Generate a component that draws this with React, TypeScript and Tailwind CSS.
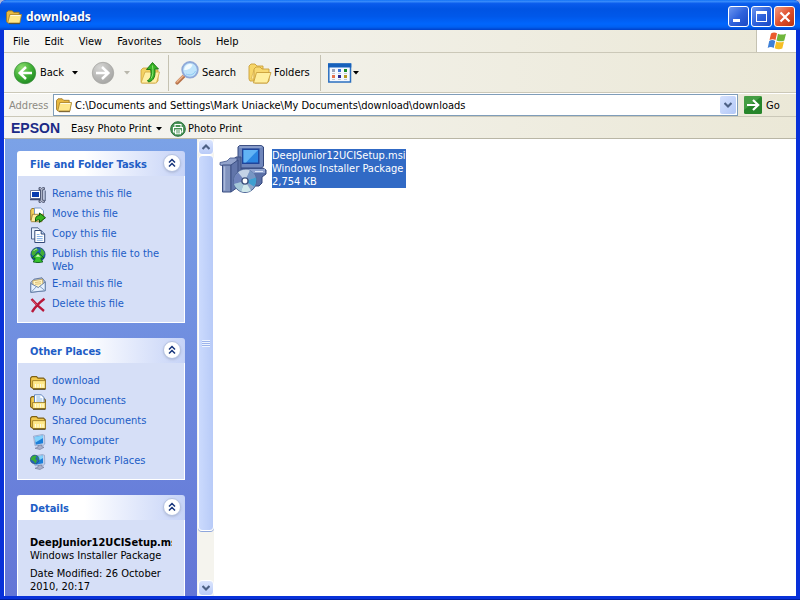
import type { ReactNode } from 'react';

const menus = ['File', 'Edit', 'View', 'Favorites', 'Tools', 'Help'];

function FolderIcon({ className }: { className: string }) {
  return (
    <svg className={className} viewBox="0 0 16 16" aria-hidden="true">
      <path d="M.5 3.500 2 1.800h4.200l1.500 1.500h5.500v3H15l-1.500 7.700H1.800L.5 12.500Z" fill="#e9b93f" stroke="#94701f" strokeWidth=".8" />
      <path d="M1.800 13.500 3.800 5.500h11.800l-1.800 8.500H2.200Z" fill="#ffe88c" stroke="#a8802a" strokeWidth=".8" />
      <path d="M4.500 6.500h9.700" stroke="#fffbe0" strokeWidth="1.200" />
      <path d="M3 14.700h11" stroke="#5b4515" strokeWidth=".8" />
    </svg>
  );
}

function PlainFolderIcon({ papers = false }: { papers?: boolean }) {
  return (
    <svg className="h-4 w-4" viewBox="0 0 16 16" aria-hidden="true">
      <path d="M.6 12.800V4L2 2.600h4.500L8 4.100h5.500l1.900 1.900v8.500H3Z" fill="#f2c94c" stroke="#7d6018" strokeWidth="1.100" />
      {papers && <path d="M4.500 10V.8h6.700L14 3.400V10Z" fill="#fff" stroke="#5f86bf" />}
      {papers && <path d="M6.300 3h4M6.300 5h6M6.300 7h6" stroke="#85b1e4" strokeWidth="1" />}
      <path
        d={papers ? 'M2.600 14.500V8.500h12.800v6Z' : 'M2.600 14.500V6.600h12.800v7.900Z'}
        fill="#ffe98a"
        stroke="#94731f"
        strokeWidth=".8"
      />
      <path d="M5.500 10v3.500M8 10v3.500M10.500 10v3.500M13 10v3.500" stroke="#fffde4" strokeWidth="1.100" />
      <path d="M3 15.300h12.500" stroke="#4d3c12" strokeWidth="1" />
    </svg>
  );
}

function RenameIcon() {
  return (
    <svg className="h-4 w-4" viewBox="0 0 16 16" aria-hidden="true">
      <path d="M.5 3.500h10v8H.5Z" fill="#fff" stroke="#6a7699" />
      <path d="M2 5h7v5H2Z" fill="#083cae" />
      <path d="M0 12.500h10" stroke="#3e4a70" strokeWidth="1.400" />
      <path d="M9 .7h1.700l1 .8 1-.8h1.700v2h-1.700v10.600h1.700v2h-1.700l-1-.8-1 .8H9v-2h1.700V2.700H9Z" fill="#c5cadb" stroke="#3d4662" strokeWidth=".9" />
      <path d="M15.200 3.500v10.500" stroke="#5b6684" strokeWidth="1.200" />
    </svg>
  );
}

function MoveIcon() {
  return (
    <svg className="h-4 w-4" viewBox="0 0 16 16" aria-hidden="true">
      <path d="M.7 13V2.800L2 1.500h3l1.500 1.500H11v10Z" fill="#f2cf5c" stroke="#8f6f20" strokeWidth=".9" />
      <path d="M4.500 1h6l3 2.600V10h-9Z" fill="#fff" stroke="#6e91c2" strokeWidth=".9" />
      <path d="m.9 14.200 1.600-6.900h11l-1.600 7.400H1.500Z" fill="#ffeb99" stroke="#94742a" strokeWidth=".8" />
      <path d="M5.500 11.300C6 9.500 7.500 8.500 9.500 8.500V6l6 4.700-6 4.700v-2.600c-1.800 0-3 .4-4 1.700Z" fill="#39b51e" stroke="#0f550d" strokeWidth="1" />
    </svg>
  );
}

function CopyIcon() {
  return (
    <svg className="h-4 w-4" viewBox="0 0 16 16" aria-hidden="true">
      <path d="M1.500.8h6.500l2 2V12H1.500Z" fill="#e6effd" stroke="#51658c" />
      <path d="M4.800 3.500h6.400l3.500 3.500v8.500H4.800Z" fill="#fff" stroke="#344a78" />
      <path d="M11.200 3.500V7h3.500" fill="#b9d0f2" stroke="#344a78" />
      <path d="M6.800 7.500h2.700M6.800 9.500h5.900M6.800 11.500h5.900M6.800 13.300h5.900" stroke="#8ab3e6" />
    </svg>
  );
}

function PublishIcon() {
  return (
    <svg className="h-4 w-4" viewBox="0 0 16 16" aria-hidden="true">
      <circle cx="8" cy="7.500" r="7.100" fill="#1f5fb8" stroke="#173f78" strokeWidth=".8" />
      <path d="M1.500 6c.3-2.500 2.500-4.500 5-4.800L9 3 6.500 5 4.500 8.500H2ZM10 1.200c2.500.8 4.500 3 4.700 5.800l-2 2.500L10 6l1-2Z" fill="#43ad34" />
      <path d="M3.500 4c1-1.200 2-1.800 3.500-2" stroke="#b9ea9c" fill="none" />
      <path d="m8 5.500 6 5.500h-3c0 2 .8 2.800 2 3.800-3 1-7 1-10 0 1.200-1 2-1.800 2-3.800H2Z" fill="#36c22c" stroke="#0b5c19" strokeWidth=".9" />
      <path d="m8 7.300 2.500 2.500h-5Z" fill="#d3f9bd" />
    </svg>
  );
}

function MailIcon() {
  return (
    <svg className="h-4 w-4" viewBox="0 0 16 16" aria-hidden="true">
      <path d="M.8 5.500 4 2.200 12 .8l3.200 4v8.900L.8 15.300Z" fill="#aebfdc" stroke="#5a7194" strokeWidth=".9" />
      <path d="m2.800 3.800 9.700-1.600.8 7.800-10 1Z" fill="#fff4c4" stroke="#c0a050" strokeWidth=".8" />
      <path d="M5 5.500 11 4.700M5 7.300l6-.6" stroke="#d3b35e" strokeWidth=".8" />
      <path d="M.8 6.500 8.300 10.500 15.200 5v8.700L.8 15.300Z" fill="#e6f1ff" stroke="#5f7ba5" strokeWidth=".9" />
      <path d="m1.500 14.800 5-5.200M14.700 13.400 10 9.500" stroke="#7895bd" strokeWidth=".9" />
    </svg>
  );
}

function DeleteIcon() {
  return (
    <svg className="h-4 w-4" viewBox="0 0 16 16" aria-hidden="true">
      <path d="M1.500 2c3.500 4 7.500 8 12.500 12M14.500 1.800C9.500 5.500 5.500 9.500 2 15" fill="none" stroke="#b8183a" strokeWidth="2.400" />
      <path d="M2.500 3.500 7 8" stroke="#e4657a" strokeWidth=".7" />
    </svg>
  );
}

function ComputerIcon({ globe = false }: { globe?: boolean }) {
  return (
    <svg className="h-4 w-4" viewBox="0 0 16 16" aria-hidden="true">
      <path d="m3.500 2.200 9-1.700 2 .8.300 8.700-1.300 1.200L5 11.800Z" fill="#c4d2ec" stroke="#7d90b8" strokeWidth=".6" />
      <path d="m4.600 3 8.200-1.500.3 7.700-7.400 1.500Z" fill="#1d7fd8" />
      <path d="m4.600 3 8.200-1.500L13 4 5.500 8.500Z" fill="#84d2fb" />
      <path d="m8 11.500 3.500-.6.300 1.600 2.200.8-4 2.200-5-1.200 3-1.200Z" fill="#a9b0cc" stroke="#6d7494" strokeWidth=".6" />
      {globe && <circle cx="4.700" cy="5.500" r="4.400" fill="#2861b8" stroke="#234f6b" strokeWidth=".6" />}
      {globe && <path d="M.8 5.500C1 3 3 1.400 6 1.500L6.500 3 5 4.500 7 6.500 5.500 9.500 3.500 7ZM7.500 2.500l1.300 2-.8 1.500Z" fill="#38ae35" />}
    </svg>
  );
}

function InstallerIcon() {
  return (
    <svg className="h-12 w-12 shrink-0" viewBox="0 0 48 48" aria-hidden="true">
      <path d="M20 23h24l3 2v4l-4 3v6l-3 3H20Z" fill="#5a70a6" stroke="#35477c" />
      <path d="M24 24h22v4H24Z" fill="#8fa3cf" />
      <path d="M36 26.500h8" stroke="#dbe5f7" />
      <path d="M19 2 20.500.6h22L44.500 2v19l-2 2h-22L19 21Z" fill="#6f86bb" stroke="#33477c" />
      <path d="M20.500 2h22" stroke="#a6b8dd" />
      <path d="M23 3.500h17.500V19H23Z" fill="#1f459c" />
      <path d="M24.500 5H39v12.500H24.500Z" fill="#2c86e2" />
      <path d="M24.500 5H39L27 17.500h-2.500Z" fill="#62b3f5" />
      <path d="M10 18 17 12h5v28h-8Z" fill="#5a6da0" stroke="#3c5083" />
      <path d="M1 17.500 8 16l3-3h7v4l-6 4H4.500L1 20Z" fill="#93a4cc" stroke="#40548a" strokeWidth=".8" />
      <path d="M3.500 20H12v27H3.500Z" fill="#8193be" stroke="#3a4e82" />
      <path d="M5.500 21.500v24" stroke="#aab8da" strokeWidth="1.500" />
      <path d="m12 20 7-5v27l-7 5Z" fill="#6175aa" stroke="#3c5083" />
      <circle cx="26" cy="36" r="11.500" fill="#8fa6c9" stroke="#4c6494" />
      <path d="m26 36-7-8.600c4-3.300 9-3.500 12-1.800Z" fill="#c3d2e6" />
      <path d="m26 36 5-10.400c3 1.300 5 4 5.800 7Z" fill="#7796c4" />
      <path d="m26 36 11-3.400c.8 3 0 6.400-2 9Z" fill="#3f9fd0" />
      <path d="m26 36 6 9.400c-3 1.900-7 2.200-10 .8Z" fill="#cfe8ea" />
      <path d="m26 36-11 3c-1-3.500.3-8 4-11.600Z" fill="#6f83bb" />
      <path d="m26 36-11 3c1 3 3.500 6 7 7.200Z" fill="#a4c7d8" />
      <circle cx="26" cy="36" r="3.800" fill="#40557f" />
      <circle cx="26" cy="36" r="2.400" fill="#fff" />
    </svg>
  );
}

function RoundArrow({ forward = false }: { forward?: boolean }) {
  const id = forward ? 'fwd' : 'back';
  return (
    <svg className="h-6 w-6 shrink-0" viewBox="0 0 24 24" aria-hidden="true">
      <defs>
        <radialGradient id={id} cx=".35" cy=".25" r=".85">
          <stop offset="0" stopColor={forward ? '#d6d6d4' : '#8bdc6e'} />
          <stop offset=".55" stopColor={forward ? '#b8b8b6' : '#3fae35'} />
          <stop offset="1" stopColor={forward ? '#a2a2a0' : '#1a841f'} />
        </radialGradient>
      </defs>
      <circle cx="12" cy="12" r="10.700" fill={`url(#${id})`} stroke={forward ? '#a6a6a2' : '#3b8f3b'} strokeWidth=".8" />
      <path
        d={forward ? 'M5 12h12M11 6l6.300 6-6.300 6' : 'M19 12H7M13 6l-6.300 6 6.300 6'}
        fill="none"
        stroke="#fff"
        strokeWidth="2.500"
      />
    </svg>
  );
}

function UpIcon() {
  return (
    <svg className="h-6 w-6" viewBox="0 0 24 24" aria-hidden="true">
      <path d="M3 21V9l2-2h5l2 2h8v11l-3 2H4Z" fill="#f3d264" stroke="#cda136" strokeWidth=".8" />
      <path d="m3 22 4-11h14.500l-3 11Z" fill="#fff0a6" stroke="#d1a842" strokeWidth=".8" />
      <path d="M9.500 19.500c3.500-1.500 4-5 3.200-11H8.500L14.500 1.500 20.500 8h-3.700c1 7-1 12-6.300 13Z" fill="#36b326" stroke="#167012" strokeWidth=".9" />
      <path d="M14.500 4.500c.8 6 .5 10-1.500 13" stroke="#8ee570" fill="none" />
    </svg>
  );
}

function SearchIcon() {
  return (
    <svg className="h-6 w-6 shrink-0" viewBox="0 0 24 24" aria-hidden="true">
      <path d="m2.200 21.800 7.500-7.500" stroke="#b8734a" strokeWidth="3.600" strokeLinecap="round" />
      <path d="m2 21 7-7" stroke="#edb48b" strokeWidth="1.500" strokeLinecap="round" />
      <circle cx="15" cy="8.800" r="7.800" fill="#bfe4fb" stroke="#8fa9d8" strokeWidth="1.800" />
      <path d="M9.200 9a6 6 0 0 1 8.300-5.500c-1 4-4 5.500-8.300 5.500Z" fill="#f2fbff" />
      <path d="M11 13c4 2 8 .5 9.500-3" stroke="#8fcaf4" fill="none" />
    </svg>
  );
}

function FoldersIcon() {
  return (
    <svg className="h-6 w-6 shrink-0" viewBox="0 0 24 24" aria-hidden="true">
      <path d="M1 18V5l2-2h4l2 2h6v12l-2 3H2Z" fill="#f7d668" stroke="#c99f3a" strokeWidth=".9" />
      <path d="m3 18 3-9h9v9Z" fill="#ffe896" stroke="#d4ab47" strokeWidth=".6" />
      <path d="M6 20V8l2-2h4l2 2h7v12l-2 2H7Z" fill="#f8d970" stroke="#c99f3a" strokeWidth=".9" />
      <path d="m5.500 22 3-10.500H23L19.500 22Z" fill="#ffef9f" stroke="#c99f3a" strokeWidth=".9" />
    </svg>
  );
}

function ViewsIcon() {
  return (
    <svg className="h-5 w-6 shrink-0" viewBox="0 0 24 20" aria-hidden="true">
      <path d="M.8 1h21.700v18H.8Z" fill="#f4f8ff" stroke="#2b6fc0" strokeWidth="1.500" />
      <path d="M0 .5h23.300V4.500H0Z" fill="#1660bb" />
      <path d="M4 6h3v3H4Z" fill="#9aa4ba" />
      <path d="M10 6h3v3h-3Z" fill="#4075d5" />
      <path d="M16 6h3v3h-3Z" fill="#198b2b" />
      <path d="M4 12h3v3H4Z" fill="#e5714d" />
      <path d="M10 12h3v3h-3Z" fill="#2e2a91" />
      <path d="M16 12h3v3h-3Z" fill="#b69a22" />
      <path d="M4 10.500h3M10 10.500h3M16 10.500h3M4 16.500h3M10 16.500h3M16 16.500h3" stroke="#b7bcc8" strokeWidth=".8" />
    </svg>
  );
}

function PrintIcon() {
  return (
    <svg className="h-4 w-4 shrink-0" viewBox="0 0 16 16" aria-hidden="true">
      <circle cx="8" cy="8" r="7.300" fill="#4a9357" stroke="#27703a" />
      <path d="M5 6.500V3.500h6v3M3.500 6.500h9v4.500h-9ZM5.500 9h5v3.800h-5Z" fill="none" stroke="#fff" strokeWidth="1.100" />
    </svg>
  );
}

function WindowsFlag() {
  return (
    <svg className="h-5 w-5" viewBox="0 0 20 20" aria-hidden="true">
      <path d="M4 2.500C6 1 8 1.200 10 2.200L8.500 9C6.500 7.800 4.500 8 2.500 9Z" fill="#ea5b2d" />
      <path d="M11 2.700c2.500 1.200 5 1.200 8 0L17.300 9.500c-2.500 1.300-5 1-7.800 0Z" fill="#6fb63c" />
      <path d="M2.200 10c2-1.200 4-1.200 6 0l-1.500 7c-2-1.200-4-1.200-6 0Z" fill="#3e80d8" />
      <path d="M9.200 10.500c2.500 1.100 5 1.200 7.800 0l-1.700 7c-2.500 1.200-5 1-7.600-.2Z" fill="#f6be25" />
    </svg>
  );
}

function Caret({ className = 'text-black' }: { className?: string }) {
  return (
    <svg className={`h-1 w-2 shrink-0 ${className}`} viewBox="0 0 8 4" aria-hidden="true">
      <path d="M1 0h6L4 3.500Z" fill="currentColor" />
    </svg>
  );
}

function Chevron({ up = false }: { up?: boolean }) {
  return (
    <svg className="h-2 w-2" viewBox="0 0 8 8" aria-hidden="true">
      <path d={up ? 'M.5 6 4 2.500 7.500 6' : 'M.5 2 4 5.500 7.500 2'} fill="none" stroke="#4d6185" strokeWidth="2.200" />
    </svg>
  );
}

function ScrollButton({ label, up = false }: { label: string; up?: boolean }) {
  return (
    <button
      aria-label={label}
      className="flex h-4 w-4 shrink-0 items-center justify-center rounded-sm border border-white bg-gradient-to-b from-[#dbe5fe] to-[#b9cbf8]"
    >
      <Chevron up={up} />
    </button>
  );
}

function Panel({ title, children }: { title: string; children: ReactNode }) {
  return (
    <section className="shrink-0">
      <header className="flex h-[25px] items-center justify-between rounded-t-[3px] bg-gradient-to-r from-white from-40% to-[#c6d3f7] pt-[2px] pr-1 pl-[13px]">
        <h2 className="font-bold text-[#215dc6]">{title}</h2>
        <button
          aria-label={`Collapse ${title}`}
          className="mb-1 flex h-[18px] w-[18px] items-center justify-center rounded-full border border-[#b4c2e2] bg-white shadow-sm"
        >
          <svg className="h-3 w-3" viewBox="0 0 12 12" aria-hidden="true">
            <path d="m3 5.500 3-3 3 3M3 9.500l3-3 3 3" fill="none" stroke="#16347c" strokeWidth="1.500" />
          </svg>
        </button>
      </header>
      <div className="border border-t-0 border-white bg-[#d6dff7] px-3 pt-[11px] pb-[9px]">{children}</div>
    </section>
  );
}

function TaskList({ items }: { items: { label: string; icon: ReactNode }[] }) {
  return (
    <ul className="flex flex-col gap-1">
      {items.map((item) => (
        <li key={item.label}>
          <a href="#" className="flex min-h-4 items-start gap-[6px] text-[#215dc6] hover:underline">
            <span className="h-4 shrink-0">{item.icon}</span>
            <span>{item.label}</span>
          </a>
        </li>
      ))}
    </ul>
  );
}

const fileTasks = [
  { label: 'Rename this file', icon: <RenameIcon /> },
  { label: 'Move this file', icon: <MoveIcon /> },
  { label: 'Copy this file', icon: <CopyIcon /> },
  { label: 'Publish this file to the Web', icon: <PublishIcon /> },
  { label: 'E-mail this file', icon: <MailIcon /> },
  { label: 'Delete this file', icon: <DeleteIcon /> },
];

const places = [
  { label: 'download', icon: <PlainFolderIcon /> },
  { label: 'My Documents', icon: <PlainFolderIcon papers /> },
  { label: 'Shared Documents', icon: <PlainFolderIcon /> },
  { label: 'My Computer', icon: <ComputerIcon /> },
  { label: 'My Network Places', icon: <ComputerIcon globe /> },
];

function TitleBar() {
  return (
    <header className="flex h-[30px] shrink-0 items-center rounded-t-md bg-[linear-gradient(#0a6cf5,#3b8ffc_4%,#0a5cec_12%,#0054e3_30%,#0058ea_55%,#0066fd_80%,#0060f2_90%,#0040c8)] pt-[3px] pr-[5px] pl-[6px]">
      <FolderIcon className="h-4 w-4" />
      <h1 className="ml-1 flex-1 font-['Noto_Sans'] text-[12px] font-bold text-white [text-shadow:1px_1px_#0a3292]">downloads</h1>
      <div className="flex gap-[2px]">
        <button aria-label="Minimize" className="flex h-[21px] w-[21px] items-end rounded-[3px] border border-white bg-gradient-to-br from-[#6d96f0] via-[#2f62dc] to-[#1a48c4] pb-1 pl-1">
          <span className="h-[3px] w-[7px] bg-white" />
        </button>
        <button aria-label="Maximize" className="flex h-[21px] w-[21px] items-center justify-center rounded-[3px] border border-white bg-gradient-to-br from-[#6d96f0] via-[#2f62dc] to-[#1a48c4]">
          <span className="h-[11px] w-[11px] border border-t-[3px] border-white" />
        </button>
        <button aria-label="Close" className="flex h-[21px] w-[21px] items-center justify-center rounded-[3px] border border-white bg-gradient-to-br from-[#f09a80] via-[#e0502c] to-[#b8330f]">
          <svg className="h-3 w-3" viewBox="0 0 12 12" aria-hidden="true">
            <path d="m1.500 1.500 9 9M10.500 1.500l-9 9" stroke="#fff" strokeWidth="2.200" />
          </svg>
        </button>
      </div>
    </header>
  );
}

function Toolbar() {
  return (
    <div className="flex h-10 shrink-0 items-center border-b border-[#cbc8b8] pl-[9px]">
      <button className="flex w-[66px] items-center gap-[3px]">
        <RoundArrow />
        <span className="flex-1 text-left">Back</span>
        <Caret />
      </button>
      <button aria-label="Forward" className="ml-3 flex w-[40px] items-center justify-between">
        <RoundArrow forward />
        <Caret className="text-[#b9b7ac]" />
      </button>
      <button aria-label="Up" className="ml-[7px]">
        <UpIcon />
      </button>
      <div className="ml-[6px] h-9 border-l border-[#c5c2b2]" />
      <button className="ml-[6px] flex w-[73px] items-center gap-[3px] whitespace-nowrap">
        <SearchIcon />
        Search
      </button>
      <button className="flex w-[72px] items-center gap-[2px] whitespace-nowrap">
        <FoldersIcon />
        Folders
      </button>
      <div className="h-9 border-l border-[#c5c2b2]" />
      <button aria-label="Views" className="ml-[7px] flex items-center">
        <ViewsIcon />
        <Caret />
      </button>
    </div>
  );
}

function AddressBar() {
  return (
    <form className="flex h-6 shrink-0 items-center border-t border-b border-t-white border-b-[#cbc8b8] pl-[5px]">
      <label htmlFor="address" className="w-11 shrink-0 text-[#8d8a82]">Address</label>
      <div className="flex h-[22px] min-w-0 flex-1 items-center border border-[#7f9db9] bg-white pr-px pl-[2px]">
        <FolderIcon className="h-4 w-4 shrink-0" />
        <input
          id="address"
          defaultValue="C:\Documents and Settings\Mark Uniacke\My Documents\download\downloads"
          className="ml-[3px] min-w-0 flex-1 outline-none"
        />
        <button type="button" aria-label="Show addresses" className="flex h-[18px] w-4 items-center justify-center rounded-[2px] bg-gradient-to-br from-[#d6e2fe] to-[#b3c8f7]">
          <Chevron />
        </button>
      </div>
      <button type="button" className="mx-[6px] flex w-[46px] items-center gap-1">
        <svg className="h-[18px] w-[18px] shrink-0" viewBox="0 0 18 18" aria-hidden="true">
          <rect width="18" height="18" rx="1.500" fill="#26852a" />
          <path d="M0 0h18L0 14Z" fill="#58ae55" opacity=".6" />
          <path d="M3 9h11M9 4l5.200 5L9 14" fill="none" stroke="#fff" strokeWidth="2.200" />
        </svg>
        Go
      </button>
    </form>
  );
}

export default function App() {
  return (
    <div className="bg-[#a9b6da] font-['DejaVu_Sans_Condensed','Noto_Sans',sans-serif] text-[11px] leading-[13px] text-black">
      <div className="flex h-screen flex-col overflow-hidden rounded-t-md border-b border-[#001ea0] bg-[#0831d9]">
        <TitleBar />
        <div className="mx-1 mb-[3px] flex min-h-0 flex-1 flex-col bg-[#ece9d8]">
          <div className="bg-gradient-to-r from-[#f6f6f3] to-[#ebe8d7]">
            <div className="flex h-[23px] border-b border-[#cbc8b8]">
              <nav className="flex flex-1 items-center gap-[15px] pl-[9px]">
                {menus.map((menu) => (
                  <button key={menu}>{menu}</button>
                ))}
              </nav>
              <div className="flex w-10 items-center justify-center border-l border-[#c5c2b2] bg-white">
                <WindowsFlag />
              </div>
            </div>
            <Toolbar />
            <AddressBar />
            <div className="flex h-[22px] items-center border-b border-[#b9b6a5] pt-[2px] pl-[7px]">
              <span className="w-[60px] font-['Liberation_Sans'] text-[14px] font-bold text-[#1b2a86]">EPSON</span>
              <button className="flex w-[92px] items-center justify-between whitespace-nowrap">
                Easy Photo Print
                <Caret />
              </button>
              <button className="ml-[7px] flex items-center gap-[2px] whitespace-nowrap">
                <PrintIcon />
                Photo Print
              </button>
            </div>
          </div>

          <div className="flex min-h-0 flex-1 bg-white">
            <aside className="ml-px flex w-48 shrink-0 flex-col gap-[15px] overflow-hidden bg-gradient-to-b from-[#7ba2e7] to-[#6375d6] px-3 pt-3">
              <Panel title="File and Folder Tasks">
                <TaskList items={fileTasks} />
              </Panel>
              <Panel title="Other Places">
                <TaskList items={places} />
              </Panel>
              <Panel title="Details">
                <p className="overflow-hidden pt-[5px] font-bold whitespace-nowrap">DeepJunior12UCISetup.msi</p>
                <p className="whitespace-nowrap">Windows Installer Package</p>
                <p className="mt-[5px]">Date Modified: 26 October 2010, 20:17</p>
              </Panel>
            </aside>

            <div className="flex w-[17px] shrink-0 flex-col items-center bg-[#f5f4ee]">
              <ScrollButton label="Scroll up" up />
              <div className="flex w-4 flex-[375] items-center justify-center rounded-sm border border-white bg-gradient-to-r from-[#cbdafd] to-[#b8cbf8] shadow-[0_1px_#8ea6dc]">
                <div className="h-[7px] w-2 bg-[repeating-linear-gradient(#eef4fe_0_1px,#9cb4ec_1px_2px)]" />
              </div>
              <div className="flex-[49]" />
              <ScrollButton label="Scroll down" />
            </div>

            <main className="min-w-0 flex-1 pt-[6px] pl-[5px]">
              <a href="#" className="flex items-start gap-[5px]">
                <InstallerIcon />
                <span className="mt-1 bg-[#316ac5] text-white">
                  DeepJunior12UCISetup.msi
                  <br />
                  Windows Installer Package
                  <br />
                  2,754 KB
                </span>
              </a>
            </main>
          </div>
        </div>
      </div>
    </div>
  );
}
